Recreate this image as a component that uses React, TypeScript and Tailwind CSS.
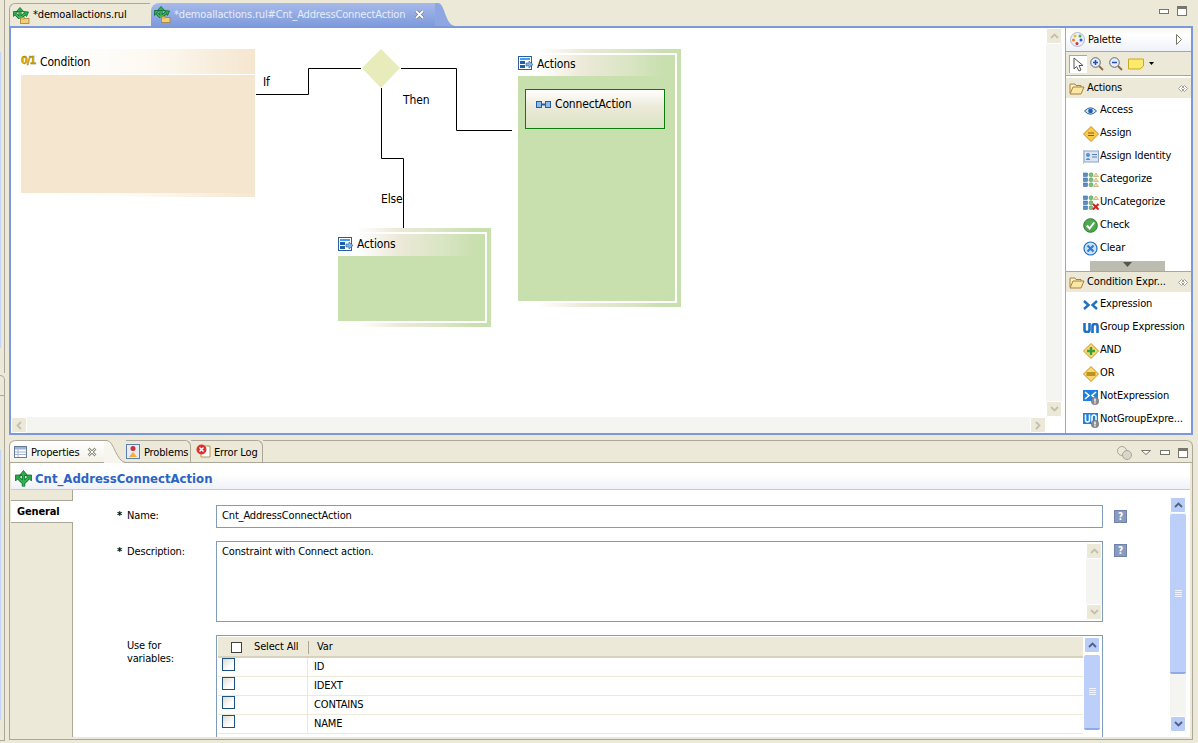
import React from "react";

const RuleIcon = () => (
  <svg viewBox="0 0 17 17" className="w-[17px] h-[17px] shrink-0">
    <path d="M7 12 V5 M6.5 11 L3 7.5 M8 10 L12 7" fill="none" stroke="#0d6b2d" strokeWidth="3" />
    <path d="M7 0.5 L10.5 4.5 H3.5 Z M0.5 4.5 H5 L0.5 9.5 Z M15.5 5 L10.5 4.5 L13.5 9.5 Z" fill="#2fb04a" stroke="#0d6b2d" strokeWidth="0.8" />
    <path d="M7 12 V5 M6.5 11 L3 7.5 M8 10 L12 7" fill="none" stroke="#3fc25c" strokeWidth="1.4" />
    <rect x="7.5" y="11.5" width="8.5" height="5" fill="#f5cf75" stroke="#a8823a" strokeWidth="0.8" />
    <rect x="7.5" y="10.5" width="4" height="1.5" fill="#f5cf75" stroke="#a8823a" strokeWidth="0.6" />
  </svg>
);

const TitleIcon = () => (
  <svg viewBox="0 0 17 17" className="w-[17px] h-[17px] shrink-0">
    <path d="M8.5 16.5 V5 M8.5 13 L3.5 8 M8.5 13 L13.5 8" fill="none" stroke="#0d6b2d" strokeWidth="3.4" />
    <path d="M8.5 0.5 L12.5 5.5 H4.5 Z M0.5 5 H6.5 L0.5 11 Z M16.5 5 H10.5 L16.5 11 Z" fill="#2fa84a" stroke="#0d6b2d" strokeWidth="0.8" />
    <path d="M8.5 16.5 V5 M8.5 13 L3.5 8 M8.5 13 L13.5 8" fill="none" stroke="#35b552" strokeWidth="1.8" />
  </svg>
);

const ActionsIcon = () => (
  <svg viewBox="0 0 15 15" className="w-[15px] h-[15px] shrink-0">
    <rect x="0.5" y="0.5" width="13" height="13" fill="#fff" stroke="#2b5c9e" />
    <rect x="2" y="2" width="10" height="2" fill="#3fa0f0" />
    <rect x="2" y="5" width="5" height="3" fill="#1f5fa8" />
    <rect x="2" y="9" width="5" height="3" fill="#1f5fa8" />
    <path d="M8 7 H11 V5 L15 8.5 L11 12 V10 H8 Z" fill="#7fb4e8" stroke="#2b5c9e" strokeWidth="0.6" />
  </svg>
);

const Folder = () => (
  <svg viewBox="0 0 16 13" className="w-[16px] h-[13px] shrink-0">
    <path d="M1 11 V2 H6 L7 3.5 H12 V5" fill="#fdf0c4" stroke="#a8823a" />
    <path d="M1 12 L4 5 H15 L12 12 Z" fill="#fce6a4" stroke="#a8823a" />
  </svg>
);

const Collapse = () => (
  <svg viewBox="0 0 10 7" className="w-[10px] h-[7px] shrink-0">
    <path d="M0.5 3.5 L3.5 0.5 L6.5 3.5 L3.5 6.5 Z M3.5 3.5 L6.5 0.5 L9.5 3.5 L6.5 6.5 Z" fill="#fff" stroke="#8d8d80" strokeWidth="0.8" />
  </svg>
);

const Diamond = ({ fill, stroke, children }: { fill: string; stroke: string; children?: React.ReactNode }) => (
  <svg viewBox="0 0 16 16" className="w-[16px] h-[16px] shrink-0">
    <path d="M8 0.5 L15.5 8 L8 15.5 L0.5 8 Z" fill={fill} stroke={stroke} />
    {children}
  </svg>
);

const Grid3 = ({ cross }: { cross?: boolean }) => (
  <svg viewBox="0 0 16 15" className="w-[16px] h-[15px] shrink-0">
    {[1, 6, 11].map((y) => (
      <g key={y}>
        <rect x="0.5" y={y} width="4" height="3.5" fill="#5b8fc4" stroke="#2b5c9e" strokeWidth="0.5" />
        <circle cx="8" cy={y + 1.8} r="2" fill="#7fc07f" stroke="#3d8a3d" strokeWidth="0.5" />
        {(!cross || y === 1) && <path d={`M13 ${y} L15.5 ${y + 3.5} H10.5 Z`} fill="#f2e2b0" stroke="#b09a50" strokeWidth="0.6" />}
      </g>
    ))}
    {cross && <path d="M10 9 L15.5 14.5 M15.5 9 L10 14.5" stroke="#d42020" strokeWidth="2" />}
  </svg>
);

const Access = () => (
  <svg viewBox="0 0 13 10" className="w-[13px] h-[10px] shrink-0">
    <path d="M0.5 5 Q6.5 -1.5 12.5 5 Q6.5 11.5 0.5 5 Z" fill="#cfe2f5" stroke="#2b5c9e" />
    <circle cx="6.5" cy="5" r="2.3" fill="#1f5fa8" />
  </svg>
);

const AssignId = () => (
  <svg viewBox="0 0 16 14" className="w-[16px] h-[14px] shrink-0">
    <rect x="1" y="1" width="14.5" height="11" fill="#dbe6f5" stroke="#8aa3c8" />
    <circle cx="5" cy="5" r="2" fill="#5b8fc4" />
    <path d="M2.5 10 Q5 6 7.5 10 Z" fill="#5b8fc4" />
    <path d="M9 4.5 H14 M9 7 H14" stroke="#5b7fb0" />
    <path d="M0.5 0 V14" stroke="#b8c4d8" />
  </svg>
);

const Check = () => (
  <svg viewBox="0 0 15 15" className="w-[15px] h-[15px] shrink-0">
    <circle cx="7.5" cy="7.5" r="6.8" fill="#4ea84e" stroke="#2f7a2f" />
    <path d="M3.8 7.5 L6.5 10.5 L11.2 4.5" fill="none" stroke="#fff" strokeWidth="2" />
  </svg>
);

const Clear = () => (
  <svg viewBox="0 0 15 15" className="w-[15px] h-[15px] shrink-0">
    <circle cx="7.5" cy="7.5" r="6.5" fill="#cfe2f5" stroke="#1f6fc4" strokeWidth="1.2" />
    <path d="M4.5 4.5 L10.5 10.5 M10.5 4.5 L4.5 10.5" stroke="#2b7fd4" strokeWidth="2.2" />
  </svg>
);

const Expr = () => (
  <svg viewBox="0 0 15 10" className="w-[15px] h-[10px] shrink-0">
    <path d="M1 1 L5.5 5 L1 9 M14 1 L9.5 5 L14 9" fill="none" stroke="#1f6fc4" strokeWidth="2.4" />
  </svg>
);

const GroupExpr = () => (
  <svg viewBox="0 0 16 10" className="w-[16px] h-[10px] shrink-0">
    <path d="M1.5 0 V7 Q1.5 9 4 9 Q6.5 9 6.5 7 V0 M9.5 10 V3 Q9.5 1 12 1 Q14.5 1 14.5 3 V10" fill="none" stroke="#1f6fc4" strokeWidth="2.6" />
  </svg>
);

const NotBadge = () => (
  <g>
    <circle cx="12" cy="12" r="3.8" fill="#8c8c8c" stroke="#666" strokeWidth="0.5" />
    <rect x="11.3" y="9.6" width="1.4" height="3" fill="#fff" />
    <rect x="11.3" y="13.2" width="1.4" height="1.3" fill="#fff" />
  </g>
);

const NotExpr = () => (
  <svg viewBox="0 0 16 16" className="w-[16px] h-[16px] shrink-0">
    <rect x="0" y="1" width="15" height="11" fill="#1f7fe0" />
    <path d="M2 3 L6 6.5 L2 10 M13 3 L9 6.5 L13 10" fill="none" stroke="#fff" strokeWidth="1.6" />
    <NotBadge />
  </svg>
);

const NotGroup = () => (
  <svg viewBox="0 0 16 16" className="w-[16px] h-[16px] shrink-0">
    <rect x="0" y="1" width="15" height="11" fill="#1f7fe0" />
    <path d="M2.5 2.5 V8 Q2.5 10 4.5 10 Q6.5 10 6.5 8 V2.5 M9 11 V5 Q9 3 11 3 Q13 3 13 5 V11" fill="none" stroke="#fff" strokeWidth="1.6" />
    <NotBadge />
  </svg>
);

const Chevron = ({ up, color }: { up?: boolean; color: string }) => (
  <svg viewBox="0 0 9 6" className="w-[9px] h-[6px]">
    <path d={up ? "M1 5 L4.5 1.5 L8 5" : "M1 1 L4.5 4.5 L8 1"} fill="none" stroke={color} strokeWidth="1.8" />
  </svg>
);

const MinMax = () => (
  <div className="flex items-center gap-[8px]">
    <div className="w-[10px] h-[5px] border border-[#77766a] bg-white" />
    <div className="w-[10px] h-[10px] border border-[#77766a] border-t-[3px] bg-white" />
  </div>
);

const ScrollBtn = ({ up, active }: { up?: boolean; active?: boolean }) => (
  <div
    className={`h-[16px] w-full flex items-center justify-center shrink-0 rounded-[2px] border border-white ${
      active ? "bg-[#b9cdf6]" : "bg-[#ece9d8]"
    }`}
  >
    <Chevron up={up} color={active ? "#4d6185" : "#c2c0b0"} />
  </div>
);

const Thumb = ({ className = "" }: { className?: string }) => (
  <div className={`w-full bg-[#bccff8] border-b-2 border-[#8faae6] rounded-[2px] flex flex-col items-center justify-center gap-[1px] ${className}`}>
    <div className="w-[7px] h-px bg-[#eef3fe]" />
    <div className="w-[7px] h-px bg-[#eef3fe]" />
    <div className="w-[7px] h-px bg-[#eef3fe]" />
    <div className="w-[7px] h-px bg-[#eef3fe]" />
  </div>
);

const PaletteItem = ({ icon, label }: { icon: React.ReactNode; label: string }) => (
  <div className="h-[23px] flex items-center pl-[15px] shrink-0">
    <div className="w-[19px] flex justify-center shrink-0">{icon}</div>
    <span className="whitespace-nowrap">{label}</span>
  </div>
);

const DrawerHead = ({ label }: { label: string }) => (
  <div className="h-[20px] shrink-0 bg-[#ece9d8] flex items-center pl-[3px] pr-[3px]">
    <Folder />
    <span className="ml-[2px] flex-1 whitespace-nowrap">{label}</span>
    <Collapse />
  </div>
);

const HelpIcon = () => (
  <div className="w-[13px] h-[13px] ml-[11px] bg-[#8a9bbf] border border-[#6f82a8] text-white font-bold text-[10px] leading-none flex items-center justify-center shrink-0">
    ?
  </div>
);

const Checkbox = () => (
  <div className="w-[13px] h-[13px] border border-[#1c5180] bg-[linear-gradient(135deg,#dcdcd6,#ffffff_70%)]" />
);

const rows = ["ID", "IDEXT", "CONTAINS", "NAME"];

export default function App() {
  return (
    <div
      className="w-[1198px] h-[743px] bg-[#ece9d8] overflow-hidden flex text-[11px] tracking-[-0.15px] text-black font-stretch-condensed"
      style={{ fontFamily: '"DejaVu Sans", sans-serif' }}
    >
      {/* Neighbouring pane, only its edge shows */}
      <div className="w-[5px] mr-[4px] shrink-0 flex flex-col h-[741px]">
        <div className="h-[373px] border-r border-[#aca899] pt-[52px]">
          <div className="w-px h-[296px] bg-[#c3d3f7]" />
        </div>
        <div className="flex-1 mt-[2px] border-t border-r border-b border-[#aca899] rounded-tr-[6px] flex flex-col">
          <div className="h-[20px] border-b border-[#aca899]" />
          <div className="h-[54px]" />
          <div className="w-px h-[270px] bg-[#c3d3f7]" />
        </div>
      </div>

      <div className="flex-1 min-w-0 flex flex-col pr-[5px]">
        {/* Editor tabs */}
        <div className="h-[26px] shrink-0 flex items-end relative">
          <div className="h-[23px] w-[141px] flex items-center pl-[3px] gap-[3px] border-l border-t border-[#aca899] rounded-tl-[6px]">
            <RuleIcon />
            <span className="pt-px">*demoallactions.rul</span>
          </div>
          <div className="h-[23px] w-[284px] ml-px flex items-center pl-[3px] gap-[3px] bg-[linear-gradient(to_bottom,#a6baea,#7f9bdc)] text-[#e6ecfa] rounded-tl-[8px]">
            <RuleIcon />
            <span className="pt-px">*demoallactions.rul#Cnt_AddressConnectAction</span>
            <svg viewBox="0 0 11 11" className="w-[11px] h-[11px] ml-[6px] shrink-0">
              <path d="M2 2 L9 9 M9 2 L2 9" stroke="#6a6a60" strokeWidth="3" />
              <path d="M2 2 L9 9 M9 2 L2 9" stroke="#fff" strokeWidth="1.8" />
            </svg>
          </div>
          <svg viewBox="0 0 20 23" className="w-[20px] h-[23px] shrink-0">
            <path d="M0 0 H3 C 10 0, 10 22, 20 23 H0 Z" fill="#8ea7e2" />
          </svg>
          <div className="flex-1" />
          <div className="absolute right-[6px] top-[6px]"><MinMax /></div>
        </div>

        {/* Editor frame */}
        <div className="h-[409px] shrink-0 flex border-2 border-[#7b98dc] bg-white">
          <div className="flex-1 flex flex-col min-w-0">
            <div className="flex-1 flex min-h-0">
              <div className="flex-1 relative">
                <svg className="absolute inset-0 w-full h-full">
                  <path d="M245 66.5 H297.5 V40.5 H350" fill="none" stroke="#000" />
                  <path d="M390 40.5 H445.5 V102.5 H501" fill="none" stroke="#000" />
                  <path d="M370.5 60 V130.5 H392.5 V201" fill="none" stroke="#000" />
                  <path d="M370 21 L389 40 L370 60 L351 40 Z" fill="#e8ecba" />
                </svg>
                <span className="absolute left-[252px] top-[45px] text-[12px]">If</span>
                <span className="absolute left-[392px] top-[63px] text-[12px]">Then</span>
                <span className="absolute left-[370px] top-[162px] text-[12px]">Else</span>

                {/* Condition node */}
                <div className="absolute left-[10px] top-[21px] w-[234px] h-[148px] flex flex-col">
                  <div className="h-[25px] shrink-0 flex items-center bg-[linear-gradient(to_right,#ffffff_15%,#fdf9f2_55%,#f5e6cf)] text-[12px]">
                    <span className="text-[11px] font-black text-[#e0ac00] [-webkit-text-stroke:0.3px_#7a5c00] w-[18px] tracking-[-1px]">0/1</span>
                    <span className="ml-px">Condition</span>
                  </div>
                  <div className="h-px shrink-0 bg-white" />
                  <div className="flex-1 bg-[#f5e6cf]" />
                  <div className="h-[4px] shrink-0 bg-[linear-gradient(to_right,#ffffff_15%,#fdf9f2_55%,#f5e6cf)]" />
                </div>

                {/* Else actions node */}
                <div className="absolute left-[327px] top-[200px] w-[153px] h-[99px] pt-[4px] pr-[4px] pb-[4px] flex bg-[linear-gradient(to_right,#ffffff_12%,#ece9d8_40%,#d8e5c2_70%,#c8dfae_90%)]">
                  <div className="flex-1 flex flex-col border-t-2 border-r-2 border-b-2 border-white">
                    <div className="h-[22px] flex items-center gap-[4px] pb-[2px] shrink-0 text-[12px]">
                      <ActionsIcon />
                      <span>Actions</span>
                    </div>
                    <div className="flex-1 bg-[#c8dfae]" />
                  </div>
                </div>

                {/* Then actions node */}
                <div className="absolute left-[507px] top-[21px] w-[163px] h-[258px] pt-[4px] pr-[4px] pb-[4px] flex bg-[linear-gradient(to_right,#ffffff_12%,#ece9d8_40%,#d8e5c2_70%,#c8dfae_90%)]">
                  <div className="flex-1 flex flex-col border-t-2 border-r-2 border-b-2 border-white">
                    <div className="h-[21px] flex items-center gap-[4px] pb-[4px] shrink-0 text-[12px]">
                      <ActionsIcon />
                      <span>Actions</span>
                    </div>
                    <div className="flex-1 bg-[#c8dfae] pt-[13px] pl-[7px]">
                      <div className="w-[140px] h-[40px] border border-[#0a7d0a] bg-[linear-gradient(to_bottom,#ffffff,#ece9d8_45%,#d8e5c2)] flex items-center pl-[10px] pb-[10px] text-[12px]">
                        <svg viewBox="0 0 15 7" className="w-[15px] h-[7px] shrink-0">
                          <rect x="0.5" y="0.5" width="5" height="6" fill="#8fb8ea" stroke="#1f5fa8" />
                          <rect x="9.5" y="0.5" width="5" height="6" fill="#8fb8ea" stroke="#1f5fa8" />
                          <rect x="5" y="2.5" width="5" height="2" fill="#1f5fa8" />
                        </svg>
                        <span className="ml-[4px]">ConnectAction</span>
                      </div>
                    </div>
                  </div>
                </div>
              </div>
              {/* Canvas vertical scrollbar */}
              <div className="w-[16px] mr-[3px] flex flex-col justify-between bg-[#f4f4f0] shrink-0">
                <ScrollBtn up />
                <ScrollBtn />
              </div>
            </div>
            {/* Canvas horizontal scrollbar */}
            <div className="h-[16px] mr-[19px] shrink-0 flex justify-between bg-[#f4f4f0]">
              <div className="w-[16px] flex items-center justify-center bg-[#ece9d8] border border-white rounded-[2px]">
                <svg viewBox="0 0 6 9" className="w-[6px] h-[9px]"><path d="M5 1 L1.5 4.5 L5 8" fill="none" stroke="#c2c0b0" strokeWidth="1.8" /></svg>
              </div>
              <div className="w-[16px] flex items-center justify-center bg-[#ece9d8] border border-white rounded-[2px]">
                <svg viewBox="0 0 6 9" className="w-[6px] h-[9px]"><path d="M1 1 L4.5 4.5 L1 8" fill="none" stroke="#c2c0b0" strokeWidth="1.8" /></svg>
              </div>
            </div>
          </div>

          {/* Palette */}
          <div className="w-[126px] shrink-0 border-l border-[#aca899] flex flex-col">
            <div className="h-[24px] shrink-0 flex items-center pl-[4px] pr-[9px] bg-[linear-gradient(to_bottom,#f7f6f0,#ffffff_30%,#eef2f8)] border-b border-[#aca899]">
              <svg viewBox="0 0 15 15" className="w-[15px] h-[15px] shrink-0">
                <circle cx="7.5" cy="7.5" r="7" fill="#eef0f8" stroke="#b0b8d0" />
                <circle cx="5" cy="4" r="1.5" fill="#e8c020" />
                <circle cx="10" cy="4" r="1.5" fill="#50b050" />
                <circle cx="3.5" cy="8" r="1.5" fill="#f08020" />
                <circle cx="11" cy="8" r="1.5" fill="#2060d0" />
                <circle cx="7" cy="11.5" r="1.5" fill="#d03030" />
              </svg>
              <span className="ml-[3px] pt-[2px] flex-1">Palette</span>
              <svg viewBox="0 0 6 11" className="w-[6px] h-[11px]"><path d="M0.5 0.5 L5.5 5.5 L0.5 10.5 Z" fill="#fff" stroke="#77766a" /></svg>
            </div>
            <div className="h-[24px] shrink-0 flex items-center pl-[3px] gap-[2px] bg-[#ece9d8] border-b border-[#aca899]">
              <div className="w-[18px] h-[18px] border-l border-t border-[#aca899] bg-white flex items-center justify-center">
                <svg viewBox="0 0 11 15" className="w-[11px] h-[15px]"><path d="M1 1 V12 L3.5 9.5 L6 14 L8 13 L6 8.5 H10 Z" fill="#fff" stroke="#555" /></svg>
              </div>
              <svg viewBox="0 0 14 14" className="w-[14px] h-[14px] ml-px">
                <circle cx="5.5" cy="5.5" r="4.8" fill="#e6eefa" stroke="#667" />
                <path d="M3 5.5 H8 M5.5 3 V8" stroke="#1f4fb0" strokeWidth="1.5" />
                <path d="M9 9 L13 13" stroke="#8a6a3a" strokeWidth="1.8" />
              </svg>
              <svg viewBox="0 0 14 14" className="w-[14px] h-[14px] ml-[3px]">
                <circle cx="5.5" cy="5.5" r="4.8" fill="#e6eefa" stroke="#667" />
                <path d="M3 5.5 H8" stroke="#1f4fb0" strokeWidth="1.5" />
                <path d="M9 9 L13 13" stroke="#8a6a3a" strokeWidth="1.8" />
              </svg>
              <svg viewBox="0 0 16 12" className="w-[16px] h-[12px] ml-[3px]">
                <path d="M0.5 1 H15.5 V8 L12 11 H0.5 Z" fill="#fde96a" stroke="#c8a820" />
              </svg>
              <svg viewBox="0 0 5 3" className="w-[5px] h-[3px] ml-[3px]"><path d="M0 0 H5 L2.5 3 Z" fill="#000" /></svg>
            </div>
            <div className="h-[2px] shrink-0 bg-white" />

            <DrawerHead label="Actions" />
            <div className="h-[173px] shrink-0 overflow-hidden relative pt-px">
              <PaletteItem icon={<Access />} label="Access" />
              <PaletteItem
                icon={
                  <Diamond fill="#f8c84a" stroke="#c89020">
                    <path d="M5 7 H11 M5 9.5 H11" stroke="#8a6010" />
                  </Diamond>
                }
                label="Assign"
              />
              <PaletteItem icon={<AssignId />} label="Assign Identity" />
              <PaletteItem icon={<Grid3 />} label="Categorize" />
              <PaletteItem icon={<Grid3 cross />} label="UnCategorize" />
              <PaletteItem icon={<Check />} label="Check" />
              <PaletteItem icon={<Clear />} label="Clear" />
              <div className="absolute left-[24px] top-[163px] w-[75px] h-[10px] bg-[#bdbcb0] flex justify-center">
                <svg viewBox="0 0 9 5" className="w-[9px] h-[5px] mt-px"><path d="M0 0 H9 L4.5 5 Z" fill="#55554d" /></svg>
              </div>
            </div>
            <div className="h-px shrink-0 bg-[#aca899]" />

            <DrawerHead label="Condition Expr..." />
            <div className="flex-1 min-h-0 overflow-hidden pt-px">
              <PaletteItem icon={<Expr />} label="Expression" />
              <PaletteItem icon={<GroupExpr />} label="Group Expression" />
              <PaletteItem
                icon={
                  <Diamond fill="#f8d870" stroke="#c89020">
                    <path d="M4 8 H12 M8 4 V12" stroke="#3f9f3f" strokeWidth="2.4" />
                  </Diamond>
                }
                label="AND"
              />
              <PaletteItem
                icon={
                  <Diamond fill="#f8d870" stroke="#c89020">
                    <rect x="3.5" y="6" width="9" height="4" fill="#c09020" />
                  </Diamond>
                }
                label="OR"
              />
              <PaletteItem icon={<NotExpr />} label="NotExpression" />
              <PaletteItem icon={<NotGroup />} label="NotGroupExpre..." />
            </div>
          </div>
        </div>

        <div className="h-[5px] shrink-0" />

        {/* Properties view */}
        <div className="flex-1 min-h-0 flex flex-col border-l border-r border-b border-[#aca899] rounded-tl-[6px] rounded-tr-[6px] mb-[3px] pl-px pr-[2px] pb-[2px]">
          <div className="h-[23px] shrink-0 flex items-stretch border-b border-[#aca899] relative -ml-px -mr-[2px]">
            <div className="w-[94px] bg-[linear-gradient(to_bottom,#ffffff,#f3f1e8)] flex items-center pl-[4px] rounded-tl-[6px] border-t border-[#aca899]">
              <svg viewBox="0 0 13 12" className="w-[13px] h-[12px] shrink-0">
                <rect x="0.5" y="0.5" width="12" height="11" fill="#fff" stroke="#667a99" />
                <rect x="1" y="1" width="11" height="2.5" fill="#9fb4d4" />
                <path d="M1 6 H12 M1 8.5 H12 M4 3 V11" stroke="#9fb4d4" />
              </svg>
              <span className="ml-[4px] pt-[3px]">Properties</span>
              <svg viewBox="0 0 10 10" className="w-[10px] h-[10px] ml-[8px] shrink-0">
                <path d="M1.5 1.5 L8.5 8.5 M8.5 1.5 L1.5 8.5" stroke="#8a8a7a" strokeWidth="2.6" />
                <path d="M1.5 1.5 L8.5 8.5 M8.5 1.5 L1.5 8.5" stroke="#fff" strokeWidth="1" />
              </svg>
            </div>
            <svg viewBox="0 0 22 23" className="w-[22px] h-[23px] shrink-0">
              <path d="M0 0 H3 C 10 0, 12 22, 22 23 H0 Z" fill="#f6f5ee" />
              <path d="M0 0.5 H3 C 10 0.5, 12 22, 22 22.5" fill="none" stroke="#aca899" />
            </svg>
            <div className="w-[65px] flex items-center border-t border-r border-[#aca899] rounded-tr-[6px]">
              <svg viewBox="0 0 14 15" className="w-[14px] h-[15px] shrink-0">
                <rect x="0.5" y="0.5" width="13" height="14" fill="#e6ecf6" stroke="#5b7fb0" />
                <circle cx="7" cy="4.5" r="2.5" fill="#d03030" />
                <path d="M7 8 L11 13 H3 Z" fill="#f0b030" />
              </svg>
              <span className="ml-[4px] pt-[3px]">Problems</span>
            </div>
            <div className="w-[72px] flex items-center pl-[5px] border-t border-r border-[#aca899] rounded-tr-[6px]">
              <svg viewBox="0 0 15 15" className="w-[15px] h-[15px] shrink-0">
                <path d="M5 2 H14 V13 H5 Z" fill="#fff" stroke="#b09a50" />
                <circle cx="5.5" cy="5.5" r="5" fill="#e03030" />
                <path d="M3.5 3.5 L7.5 7.5 M7.5 3.5 L3.5 7.5" stroke="#fff" strokeWidth="1.4" />
              </svg>
              <span className="ml-[3px] pt-[3px]">Error Log</span>
            </div>
            <div className="flex-1 border-t border-[#aca899] rounded-tr-[6px]" />
            <div className="absolute right-[4px] top-[5px] flex items-center gap-[9px]">
              <svg viewBox="0 0 15 15" className="w-[15px] h-[15px]">
                <circle cx="5" cy="6" r="4.5" fill="#ece9d8" stroke="#a8a698" />
                <circle cx="10" cy="10" r="4.5" fill="#d8d6c8" stroke="#a8a698" />
              </svg>
              <svg viewBox="0 0 10 5" className="w-[10px] h-[5px]"><path d="M0.5 0.5 H9.5 L5 4.5 Z" fill="#fff" stroke="#77766a" /></svg>
              <MinMax />
            </div>
          </div>

          <div className="flex-1 min-h-0 bg-white flex flex-col">
            <div className="h-[27px] shrink-0 flex items-center pl-[4px] pt-[5px] text-[13px] font-bold text-[#2a64c4] gap-[3px] border-b border-[#b8cbf0] bg-[linear-gradient(to_bottom,#ffffff_45%,#eef1f8)]">
              <TitleIcon />
              <span className="tracking-[0px]">Cnt_AddressConnectAction</span>
            </div>
            <div className="flex-1 min-h-0 flex">
              <div className="w-[62px] shrink-0 flex flex-col">
                <div className="h-[10px] bg-[#ece9d8] border-r border-[#aca899]" />
                <div className="h-[22px] bg-white flex items-center pl-[6px] pt-px font-bold border-t border-[#aca899]">General</div>
                <div className="flex-1 bg-[#ece9d8] border-r border-t border-[#aca899]" />
              </div>
              <div className="flex-1 min-w-0 pl-[43px] pt-[15px] overflow-hidden">
                <div className="flex items-center h-[23px]">
                  <div className="w-[100px] shrink-0 pl-px pb-px flex">
                    <span className="w-[10px] font-bold">*</span>
                    <span>Name:</span>
                  </div>
                  <div className="w-[887px] h-[23px] border border-[#7f9db9] px-[5px] flex items-center shrink-0">Cnt_AddressConnectAction</div>
                  <HelpIcon />
                </div>
                <div className="flex mt-[13px]">
                  <div className="w-[100px] shrink-0 pl-px pt-[3px] flex">
                    <span className="w-[10px] font-bold">*</span>
                    <span>Description:</span>
                  </div>
                  <div className="w-[887px] h-[81px] border border-[#7f9db9] pl-[5px] pt-[2px] flex shrink-0">
                    <div className="flex-1">Constraint with Connect action.</div>
                    <div className="w-[16px] h-full -mt-px flex flex-col justify-between bg-[#f4f4f0]">
                      <ScrollBtn up />
                      <ScrollBtn />
                    </div>
                  </div>
                  <div className="mt-[3px]"><HelpIcon /></div>
                </div>
                <div className="flex mt-[13px]">
                  <div className="w-[100px] shrink-0 pl-[11px] pt-[4px] leading-[13px]">Use for<br />variables:</div>
                  <div className="w-[887px] border-l border-r border-t border-[#7f9db9] p-px flex shrink-0 h-[120px]">
                    <div className="flex-1 min-w-0">
                      <div className="h-[21px] pt-[2px] bg-[#ece9d8] border-b-2 border-[#d8d2bc] flex items-center">
                        <div className="w-[90px] flex items-center pl-[13px]">
                          <div className="w-[11px] h-[11px] border border-[#404040] bg-white" />
                          <span className="ml-[12px]">Select All</span>
                        </div>
                        <div className="w-px h-[13px] bg-[#aca899]" />
                        <span className="ml-[8px]">Var</span>
                      </div>
                      {rows.map((r) => (
                        <div key={r} className="h-[19px] flex border-b border-[#ece9d8]">
                          <div className="w-[90px] pl-[4px] border-r border-[#ece9d8]"><Checkbox /></div>
                          <div className="pl-[6px] pt-px flex-1 flex items-center">{r}</div>
                        </div>
                      ))}
                    </div>
                    <div className="w-[16px] ml-px mr-px shrink-0 flex flex-col h-[95px]">
                      <ScrollBtn up active />
                      <Thumb className="h-[75px] mt-[2px]" />
                    </div>
                  </div>
                </div>
              </div>
              {/* Page scrollbar */}
              <div className="w-[16px] shrink-0 mt-[7px] mr-[4px] mb-[5px] flex flex-col bg-[#f4f4f0]">
                <ScrollBtn up active />
                <Thumb className="h-[160px] mt-px" />
                <div className="flex-1" />
                <ScrollBtn active />
              </div>
            </div>
          </div>
        </div>
      </div>
    </div>
  );
}
